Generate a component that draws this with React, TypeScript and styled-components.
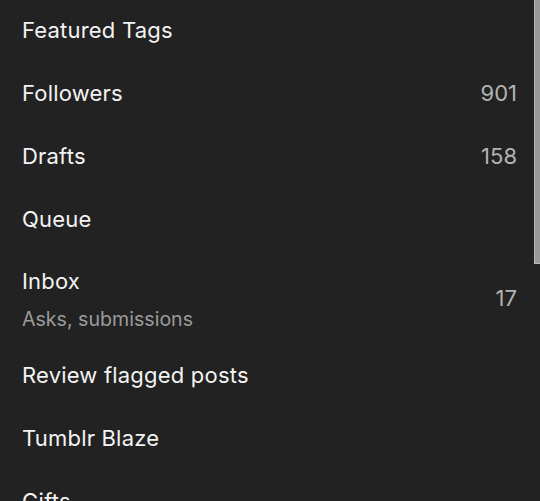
import React from "react";
import styled, { createGlobalStyle } from "styled-components";

const GlobalStyle = createGlobalStyle`
  html, body {
    margin: 0;
    padding: 0;
    background: #222222;
    overflow: hidden;
  }
  body {
    font-family: Inter, "Noto Sans", "Liberation Sans", sans-serif;
    -webkit-font-smoothing: antialiased;
  }
`;

const Panel = styled.div`
  position: relative;
  width: 540px;
  height: 501px;
  overflow: hidden;
  background: #222222;
`;

const List = styled.ul`
  list-style: none;
  margin: -2px 0 0;
  padding: 0;
`;

const Row = styled.li<{ $tall?: boolean }>`
  display: flex;
  align-items: center;
  justify-content: space-between;
  box-sizing: border-box;
  padding: ${(p) => (p.$tall ? "17px 23px 14px 22px" : "17.5px 23px 17.5px 22px")};
  height: ${(p) => (p.$tall ? "93.5px" : "63px")};
`;

const Labels = styled.div`
  display: flex;
  flex-direction: column;
`;

const Title = styled.span`
  font-size: 22px;
  line-height: 28px;
  letter-spacing: 0.2px;
  color: #f3f3f3;
`;

const Subtitle = styled.span`
  margin-top: 13px;
  font-size: 19.6px;
  line-height: 22px;
  color: #9b9b9b;
`;

const Count = styled.span`
  font-size: 22px;
  line-height: 28px;
  color: #b3b3b3;
`;

const ScrollThumb = styled.div`
  position: absolute;
  top: 0;
  right: 0;
  width: 6px;
  height: 264px;
  box-sizing: border-box;
  background: #999999;
  border-left: 1px solid #b8b8b8;
  border-bottom: 1px solid #b8b8b8;
`;

type Item = { title: string; subtitle?: string; count?: string };

const items: Item[] = [
  { title: "Featured Tags" },
  { title: "Followers", count: "901" },
  { title: "Drafts", count: "158" },
  { title: "Queue" },
  { title: "Inbox", subtitle: "Asks, submissions", count: "17" },
  { title: "Review flagged posts" },
  { title: "Tumblr Blaze" },
  { title: "Gifts" },
];

export default function App() {
  return (
    <>
      <GlobalStyle />
      <Panel>
        <List>
          {items.map((it) => (
            <Row key={it.title} $tall={!!it.subtitle}>
              <Labels>
                <Title>{it.title}</Title>
                {it.subtitle && <Subtitle>{it.subtitle}</Subtitle>}
              </Labels>
              {it.count && <Count>{it.count}</Count>}
            </Row>
          ))}
        </List>
        <ScrollThumb />
      </Panel>
    </>
  );
}
